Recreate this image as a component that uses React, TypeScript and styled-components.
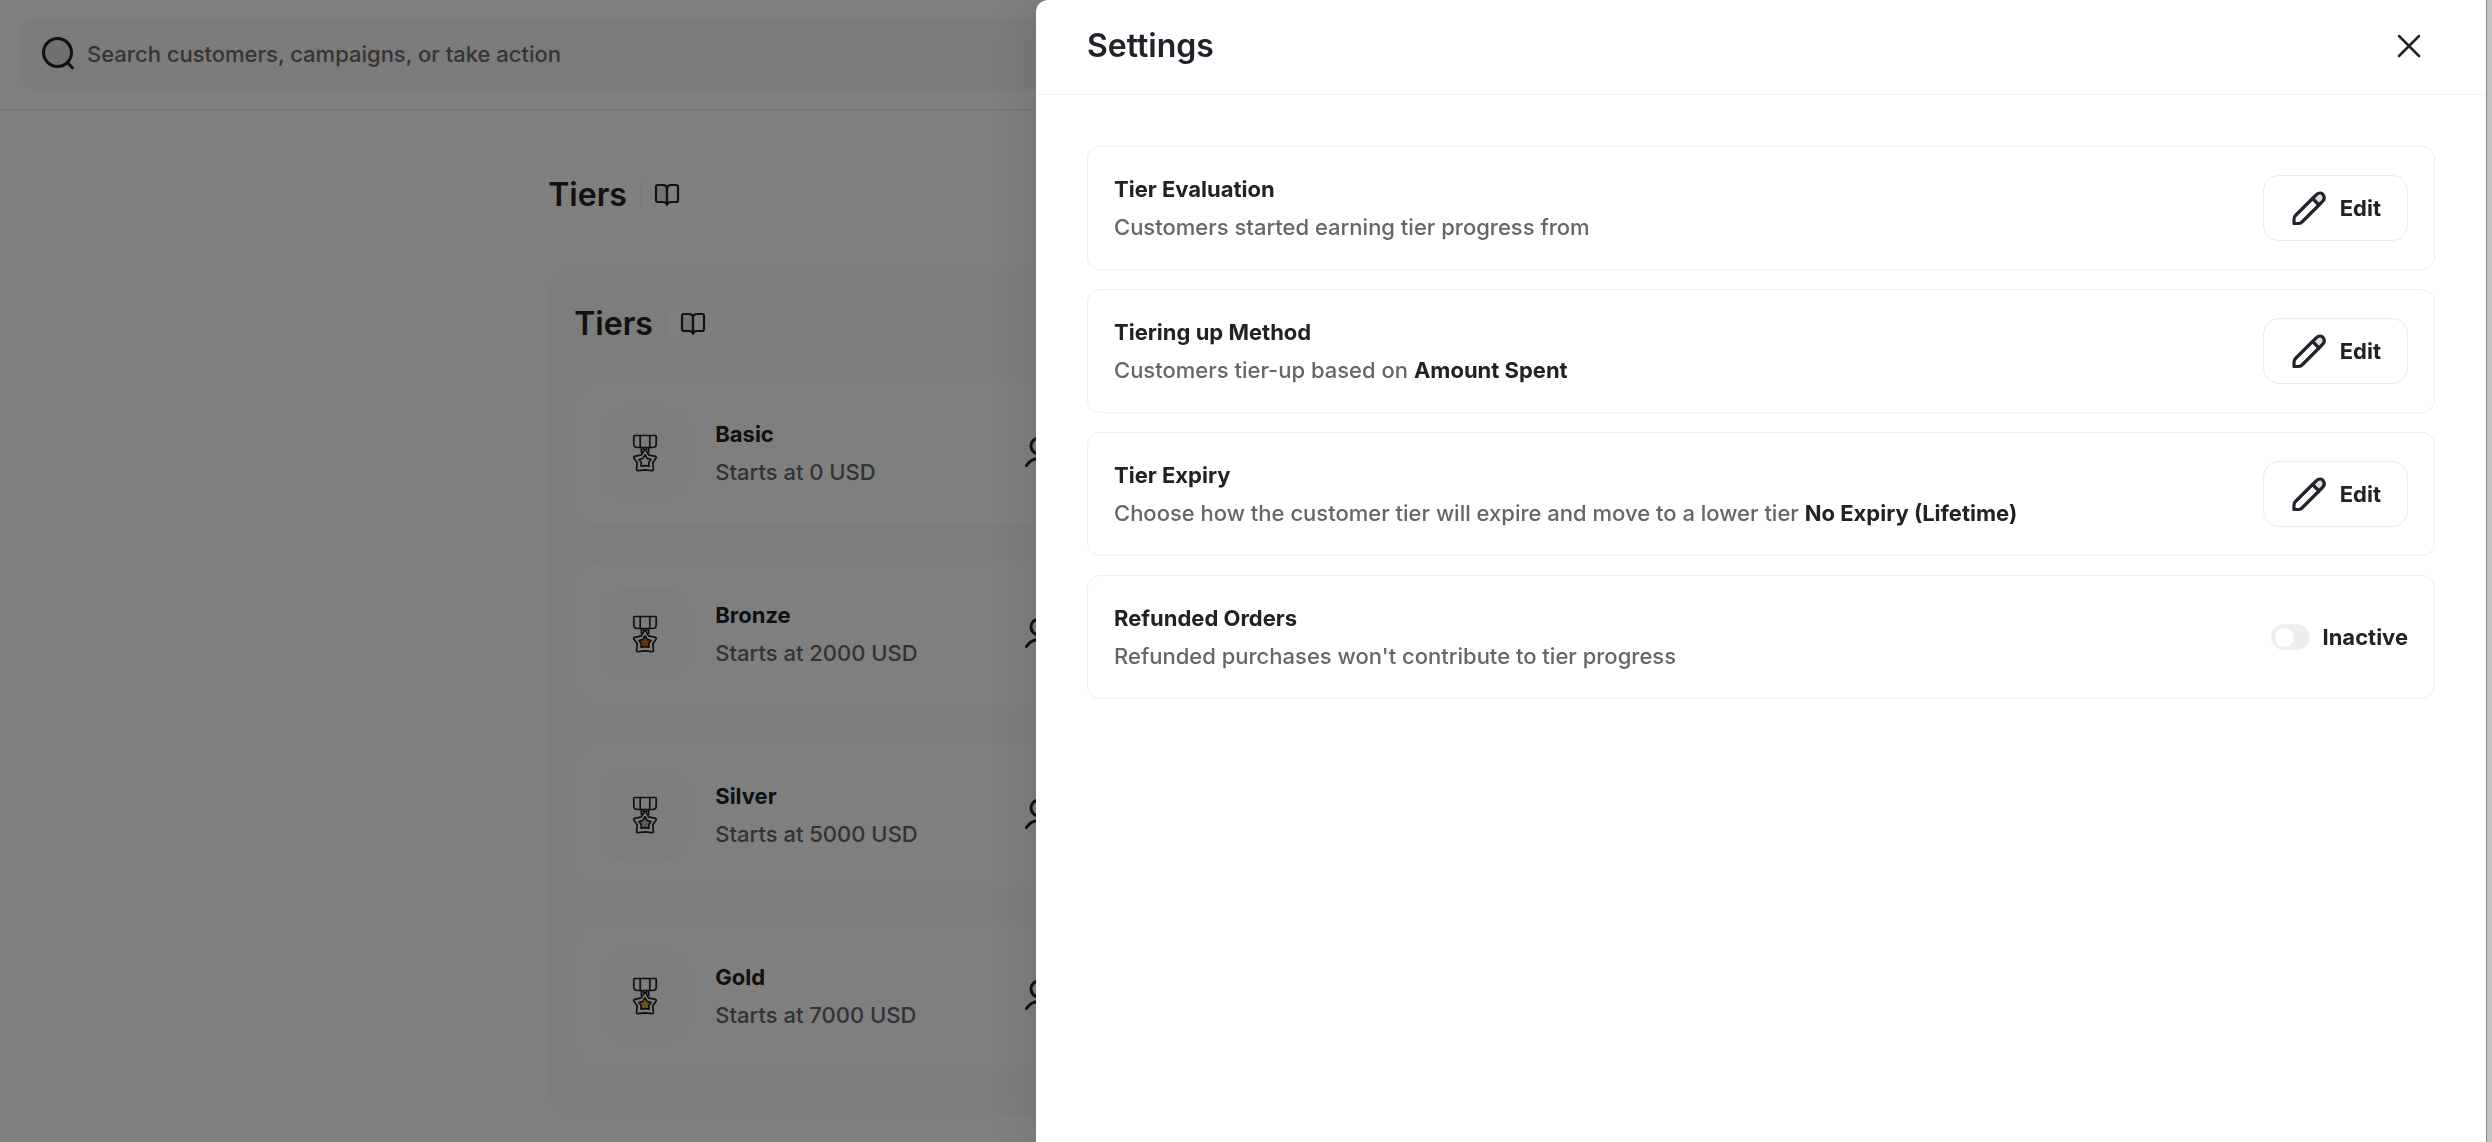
import React, { useState } from 'react';
import styled, { createGlobalStyle } from 'styled-components';

const GlobalStyle = createGlobalStyle`
  *, *::before, *::after { box-sizing: border-box; }
  html, body, #root { height: 100%; }
  body {
    margin: 0;
    overflow: hidden;
    background: #ffffff;
    color: #222222;
    font-family: Inter, "Liberation Sans", sans-serif;
    font-size: 22px;
    font-weight: 500;
    line-height: 38px;
  }
  h1, h2, h3, p { margin: 0; }
  button { font: inherit; color: inherit; cursor: pointer; }
`;

const Page = styled.div`
  min-height: 100%;
`;

const TopBar = styled.header`
  padding: 18px 20px 19px;
  border-bottom: 1px solid #e6e6e6;
`;

const SearchBox = styled.label`
  display: flex;
  align-items: center;
  gap: 9px;
  height: 72px;
  padding: 0 20px;
  border-radius: 16px;
  background: #f6f6f6;
`;

const SearchInput = styled.input`
  flex: 1;
  border: 0;
  padding: 0;
  background: transparent;
  font: inherit;
  color: #222222;
  &::placeholder { color: #6b6b6b; opacity: 1; }
`;

const Content = styled.main`
  width: 56%;
  margin: 0 auto;
  padding-top: 65px;
`;

const TitleRow = styled.div`
  display: flex;
  align-items: center;
  gap: 13px;
  height: 40px;
`;

const Title = styled.h1`
  font-size: 32px;
  line-height: 40px;
  font-weight: 600;
`;

const GuideButton = styled.button<{ $raised?: boolean }>`
  display: flex;
  align-items: center;
  height: 26px;
  padding: ${(p) => (p.$raised ? '0 6px 0 13px' : '0 6px 0 12px')};
  border: 0;
  border-left: ${(p) => (p.$raised ? '1px' : '2px')} solid #f0f0f0;
  border-radius: ${(p) => (p.$raised ? '0 8px 8px 0' : '0')};
  background: #ffffff;
`;

const Panel = styled.section`
  display: flex;
  flex-direction: column;
  gap: 38px;
  margin-top: 51px;
  padding: 38px 26px 48px;
  border-radius: 26px;
  background: #fafafa;
`;

const TierList = styled.ul`
  display: flex;
  flex-direction: column;
  gap: 39px;
  margin: 0;
  padding: 0;
  list-style: none;
`;

const TierCard = styled.li`
  display: flex;
  align-items: center;
  gap: 25px;
  padding: 25px 26px;
  border-radius: 26px;
  background: #ffffff;
`;

const MedalTile = styled.div`
  display: grid;
  place-items: center;
  width: 90px;
  height: 92px;
  border-radius: 26px;
  background: #fafafa;
`;

const TierText = styled.div`
  width: 285px;
`;

const Name = styled.h3`
  font-size: 22px;
  line-height: 38px;
  font-weight: 700;
`;

const Description = styled.p`
  color: #666666;
`;

const Strong = styled.strong`
  color: #222222;
  font-weight: 700;
`;

const Overlay = styled.div`
  position: fixed;
  inset: 0;
  display: flex;
  justify-content: flex-end;
  padding-right: 6px;
  background: linear-gradient(to left, #c9c9c9 6px, rgba(0, 0, 0, 0.5) 6px);
`;

const Drawer = styled.aside`
  display: flex;
  flex-direction: column;
  width: 1450px;
  max-width: 100%;
  border-radius: 12px 0 0 0;
  background: #ffffff;
  box-shadow: -8px 0 52px rgba(0, 0, 0, 0.1), 1px 0 1px rgba(0, 0, 0, 0.3);
`;

const DrawerHeader = styled.div`
  display: flex;
  align-items: center;
  justify-content: space-between;
  height: 95px;
  padding: 0 58px 2px 51px;
  border-bottom: 1px solid #f2f2f2;
  color: #20232a;
`;

const CloseButton = styled.button`
  display: flex;
  padding: 0;
  border: 0;
  background: transparent;
`;

const DrawerBody = styled.div`
  display: flex;
  flex-direction: column;
  gap: 19px;
  padding: 51px;
`;

const SettingCard = styled.section`
  display: flex;
  align-items: center;
  justify-content: space-between;
  padding: 23px 26px;
  border: 1px solid #eeeeee;
  border-radius: 13px;
`;

const EditButton = styled.button`
  display: flex;
  align-items: center;
  gap: 12px;
  height: 66px;
  padding: 0 26px;
  border: 1px solid #ebebeb;
  border-radius: 16px;
  background: #ffffff;
  font-weight: 700;
`;

const ToggleLabel = styled.label`
  display: flex;
  align-items: center;
  gap: 12px;
  color: #20232a;
  font-weight: 700;
`;

const Toggle = styled.input`
  appearance: none;
  display: flex;
  align-items: center;
  width: 39px;
  height: 26px;
  margin: 0;
  padding: 0 4px;
  border-radius: 13px;
  background: #eeeeee;
  &::before {
    content: '';
    width: 19px;
    height: 19px;
    border-radius: 50%;
    background: #ffffff;
  }
  &:checked { background: #2f9e5b; justify-content: flex-end; }
`;

const SearchIcon = () => (
  <svg width="38" height="38" viewBox="0 0 38 38" fill="none" stroke="#222" strokeWidth="3" strokeLinecap="round">
    <circle cx="17.5" cy="17.5" r="14" fill="#dfe1e1" />
    <path d="M27.5 27.5L32.5 33" />
  </svg>
);

const BookIcon = () => (
  <svg width="26" height="26" viewBox="0 0 26 26" fill="none" stroke="#222" strokeWidth="2.2" strokeLinejoin="round" strokeLinecap="round">
    <path d="M13 5.5Q12 3 9 3H4Q2 3 2 5V18Q2 20 4 20H9Q12 20 13 22.5Z" fill="#e6e6e6" />
    <path d="M13 5.5Q14 3 17 3H22Q24 3 24 5V18Q24 20 22 20H17Q14 20 13 22.5Z" />
  </svg>
);

const MedalIcon = ({ fill }: { fill: string }) => (
  <svg width="26" height="38" viewBox="0 0 26 38" fill="none" stroke="#222" strokeWidth="1.7" strokeLinejoin="round">
    <path d="M2.5 1.5H23.5Q24.2 1.5 24.2 2.2V10Q24.2 13.5 20.5 13.5H5.5Q1.8 13.5 1.8 10V2.2Q1.8 1.5 2.5 1.5Z" />
    <path d="M8.2 1.5V13.5M17.8 1.5V13.5M9.4 13.5V19M16.6 13.5V19M11.5 13.5V16M14.5 13.5V16" />
    <path d="M13 15.6Q13.6 15.6 14 16.4L16.6 20.8L23.4 22.4Q24.8 23 24 24.2L20.8 28.8L21.4 35.4Q21.4 36.8 20 36.6L13 35.8L6 36.6Q4.6 36.8 4.6 35.4L5.2 28.8L2 24.2Q1.2 23 2.6 22.4L9.4 20.8L12 16.4Q12.4 15.6 13 15.6Z" />
    <path d="M13 20.8L15.2 24.4L19 25.6L16.8 28.6L17 32.2L13 31.6L9 32.2L9.2 28.6L7 25.6L10.8 24.4Z" fill={fill} />
  </svg>
);

const PersonIcon = () => (
  <svg width="34" height="34" viewBox="0 0 34 34" fill="none" stroke="#222" strokeWidth="3" strokeLinecap="round">
    <circle cx="14" cy="10" r="8" />
    <path d="M1.5 29.5Q6 22.5 14 22.5T26.5 29.5" />
  </svg>
);

const CloseIcon = () => (
  <svg width="38" height="38" viewBox="0 0 38 38" fill="none" stroke="#20232a" strokeWidth="2.5" strokeLinecap="round">
    <path d="M9 9L29 29M29 9L9 29" />
  </svg>
);

const PencilIcon = () => (
  <svg width="38" height="38" viewBox="0 0 38 38" fill="none" stroke="#20232a" strokeWidth="3.2" strokeLinejoin="round">
    <path d="M22.5 9.5L26.2 5.8Q28 4 30.2 4T33.4 6.2Q35.6 9.4 32.8 12.2L29 16Z" fill="#dededb" />
    <path d="M22.5 9.5L5.5 26.5Q4 28 4 30V34.5H8.5Q11 34.5 12.5 32.5L29 16" />
  </svg>
);

const tiers = [
  { name: 'Basic', start: 'Starts at 0 USD', fill: 'none' },
  { name: 'Bronze', start: 'Starts at 2000 USD', fill: '#d2691e' },
  { name: 'Silver', start: 'Starts at 5000 USD', fill: '#b4b4b4' },
  { name: 'Gold', start: 'Starts at 7000 USD', fill: '#e8a83a' },
];

const settings = [
  { title: 'Tier Evaluation', text: 'Customers started earning tier progress from', value: '' },
  { title: 'Tiering up Method', text: 'Customers tier-up based on ', value: 'Amount Spent' },
  { title: 'Tier Expiry', text: 'Choose how the customer tier will expire and move to a lower tier ', value: 'No Expiry (Lifetime)' },
];

export default function App() {
  const [refunds, setRefunds] = useState(false);
  return (
    <>
      <GlobalStyle />
      <Page>
        <TopBar>
          <SearchBox>
            <SearchIcon />
            <SearchInput type="text" aria-label="Search" placeholder="Search customers, campaigns, or take action" />
          </SearchBox>
        </TopBar>
        <Content>
          <TitleRow>
            <Title>Tiers</Title>
            <GuideButton aria-label="Guide"><BookIcon /></GuideButton>
          </TitleRow>
          <Panel>
            <TitleRow>
              <Title as="h2">Tiers</Title>
              <GuideButton $raised aria-label="Tiers guide"><BookIcon /></GuideButton>
            </TitleRow>
            <TierList>
              {tiers.map((t) => (
                <TierCard key={t.name}>
                  <MedalTile><MedalIcon fill={t.fill} /></MedalTile>
                  <TierText>
                    <Name>{t.name}</Name>
                    <Description>{t.start}</Description>
                  </TierText>
                  <PersonIcon />
                </TierCard>
              ))}
            </TierList>
          </Panel>
        </Content>
      </Page>
      <Overlay>
        <Drawer role="dialog" aria-label="Settings">
          <DrawerHeader>
            <Title as="h2">Settings</Title>
            <CloseButton aria-label="Close"><CloseIcon /></CloseButton>
          </DrawerHeader>
          <DrawerBody>
            {settings.map((s) => (
              <SettingCard key={s.title}>
                <div>
                  <Name>{s.title}</Name>
                  <Description>{s.text}{s.value && <Strong>{s.value}</Strong>}</Description>
                </div>
                <EditButton><PencilIcon />Edit</EditButton>
              </SettingCard>
            ))}
            <SettingCard>
              <div>
                <Name>Refunded Orders</Name>
                <Description>Refunded purchases won't contribute to tier progress</Description>
              </div>
              <ToggleLabel>
                <Toggle type="checkbox" checked={refunds} onChange={(e) => setRefunds(e.target.checked)} />
                {refunds ? 'Active' : 'Inactive'}
              </ToggleLabel>
            </SettingCard>
          </DrawerBody>
        </Drawer>
      </Overlay>
    </>
  );
}
